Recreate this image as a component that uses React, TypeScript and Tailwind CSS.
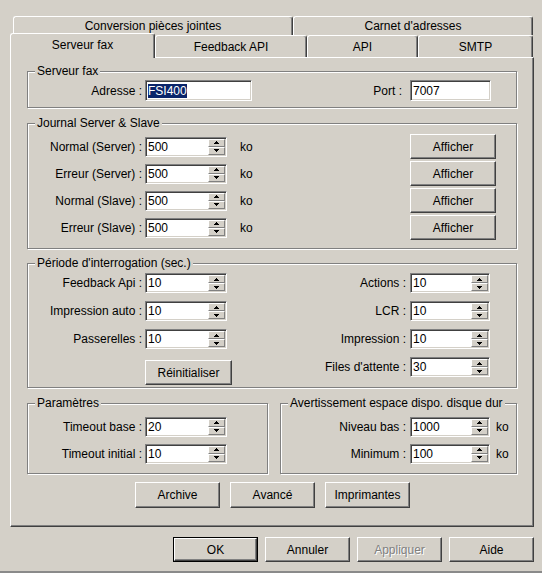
import React from "react";

const raised =
  "flex items-center justify-center bg-[#d4d0c8] border border-t-white border-l-white border-r-[#404040] border-b-[#404040] shadow-[inset_-1px_-1px_0_#808080]";

function Arrow({ up }: { up?: boolean }) {
  return (
    <svg width="5" height="3" viewBox="0 0 5 3" shapeRendering="crispEdges">
      {up ? (
        <>
          <rect x="2" y="0" width="1" height="1" fill="#000" />
          <rect x="1" y="1" width="3" height="1" fill="#000" />
          <rect x="0" y="2" width="5" height="1" fill="#000" />
        </>
      ) : (
        <>
          <rect x="0" y="0" width="5" height="1" fill="#000" />
          <rect x="1" y="1" width="3" height="1" fill="#000" />
          <rect x="2" y="2" width="1" height="1" fill="#000" />
        </>
      )}
    </svg>
  );
}

function Spin({ v, className }: { v: string; className: string }) {
  return (
    <div
      className={
        "flex h-[20px] bg-white p-[1px] border border-t-[#808080] border-l-[#808080] border-r-white border-b-white shadow-[inset_1px_1px_0_#404040,inset_-1px_-1px_0_#d4d0c8] " +
        className
      }
    >
      <span className="flex-1 pl-[1px] leading-[16px]">{v}</span>
      <div className="flex flex-col w-[17px]">
        <div className="h-[8px] flex items-center justify-center bg-[#d4d0c8] border border-t-white border-l-white border-r-[#808080] border-b-[#808080]">
          <Arrow up />
        </div>
        <div className="h-[8px] flex items-center justify-center bg-[#d4d0c8] border border-t-white border-l-white border-r-[#808080] border-b-[#808080]">
          <Arrow />
        </div>
      </div>
    </div>
  );
}

function Edit({ children, className }: { children: React.ReactNode; className: string }) {
  return (
    <div
      className={
        "flex items-center h-[21px] bg-white pl-[2px] border border-t-[#808080] border-l-[#808080] border-r-white border-b-white shadow-[inset_1px_1px_0_#404040,inset_-1px_-1px_0_#d4d0c8] " +
        className
      }
    >
      {children}
    </div>
  );
}

function Group({ title, className, children }: { title: string; className: string; children?: React.ReactNode }) {
  return (
    <div className={"relative border border-[#808080] shadow-[1px_1px_0_#fff,inset_1px_1px_0_#fff] " + className}>
      <span className="absolute -top-[8px] left-[7px] px-[2px] bg-[#d4d0c8] leading-[14px]">{title}</span>
      {children}
    </div>
  );
}

function Btn({ children, className, disabled }: { children: React.ReactNode; className: string; disabled?: boolean }) {
  return (
    <div className={raised + " " + className + (disabled ? " text-[#808080] [text-shadow:1px_1px_0_#fff]" : "")}>
      {children}
    </div>
  );
}

const tab =
  "flex items-center justify-center bg-[#d4d0c8] border-l border-t border-r border-l-white border-t-white border-r-[#404040] rounded-t-[3px] shadow-[inset_-1px_0_0_#808080]";

export default function App() {
  const journal = ["Normal (Server) :", "Erreur (Server) :", "Normal (Slave) :", "Erreur (Slave) :"];
  return (
    <div className="w-[542px] h-[573px] bg-[#d4d0c8] pt-[16px] text-[12px] leading-[14px] text-black font-['Liberation_Sans',Arial,sans-serif] border-b-2 border-[#8a8a8a] overflow-hidden">
      {/* tabs row 1 */}
      <div className="flex ml-[13px] h-[19px]">
        <div className={tab + " w-[280px]"}>Conversion pièces jointes</div>
        <div className={tab + " w-[240px]"}>Carnet d'adresses</div>
      </div>
      {/* tabs row 2 */}
      <div className="relative z-10 flex items-end ml-[10px] h-[22px]">
        <div className={tab + " w-[145px] h-[25px] -mb-[1px] pb-[3px]"}>Serveur fax</div>
        <div className={tab + " w-[152px] h-[22px]"}>Feedback API</div>
        <div className={tab + " w-[111px] h-[22px]"}>API</div>
        <div className={tab + " w-[115px] h-[22px]"}>SMTP</div>
      </div>

      {/* panel */}
      <div className="ml-[10px] w-[524px] h-[470px] border border-t-white border-l-white border-r-[#404040] border-b-[#404040] shadow-[inset_-1px_-1px_0_#808080]">
        <Group title="Serveur fax" className="mt-[13px] ml-[16px] w-[490px] h-[37px]">
          <div className="flex items-center pt-[8px]">
            <span className="w-[114px] text-right">Adresse :</span>
            <Edit className="ml-[3px] w-[107px]">
              <span className="bg-[#0a246a] text-white leading-[14px]">FSI400</span>
            </Edit>
            <span className="w-[150px] text-right">Port :</span>
            <Edit className="ml-[8px] w-[81px]">7007</Edit>
          </div>
        </Group>

        <Group title="Journal Server & Slave" className="mt-[15px] ml-[16px] w-[490px] h-[126px]">
          <div className="pt-[9px]">
            {journal.map((l) => (
              <div key={l} className="flex items-center h-[27px]">
                <span className="w-[114px] text-right">{l}</span>
                <Spin v="500" className="ml-[3px] w-[82px]" />
                <span className="ml-[13px]">ko</span>
                <Btn className="ml-auto mr-[20px] w-[86px] h-[25px]">Afficher</Btn>
              </div>
            ))}
          </div>
        </Group>

        <Group title="Période d'interrogation (sec.)" className="mt-[14px] ml-[16px] w-[490px] h-[125px]">
          <div className="flex pt-[5px]">
            <div className="flex flex-col w-[199px]">
              {[
                ["Feedback Api :", "10"],
                ["Impression auto :", "10"],
                ["Passerelles :", "10"],
              ].map(([l, v]) => (
                <div key={l} className="flex items-center h-[28px]">
                  <span className="w-[114px] text-right">{l}</span>
                  <Spin v={v} className="ml-[3px] w-[82px]" />
                </div>
              ))}
              <Btn className="mt-[7px] ml-[117px] w-[87px] h-[25px]">Réinitialiser</Btn>
            </div>
            <div className="flex flex-col">
              {[
                ["Actions :", "10"],
                ["LCR :", "10"],
                ["Impression :", "10"],
                ["Files d'attente :", "30"],
              ].map(([l, v]) => (
                <div key={l} className="flex items-center h-[28px]">
                  <span className="w-[179px] text-right">{l}</span>
                  <Spin v={v} className="ml-[4px] w-[80px]" />
                </div>
              ))}
            </div>
          </div>
        </Group>

        <div className="flex mt-[15px] ml-[16px]">
          <Group title="Paramètres" className="w-[241px] h-[71px]">
            <div className="pt-[9px]">
              {[
                ["Timeout base :", "20"],
                ["Timeout initial :", "10"],
              ].map(([l, v]) => (
                <div key={l} className="flex items-center h-[27px]">
                  <span className="w-[114px] text-right">{l}</span>
                  <Spin v={v} className="ml-[3px] w-[82px]" />
                </div>
              ))}
            </div>
          </Group>
          <Group title="Avertissement espace dispo. disque dur" className="ml-[12px] w-[237px] h-[71px]">
            <div className="pt-[9px]">
              {[
                ["Niveau bas :", "1000"],
                ["Minimum :", "100"],
              ].map(([l, v]) => (
                <div key={l} className="flex items-center h-[27px]">
                  <span className="w-[125px] text-right">{l}</span>
                  <Spin v={v} className="ml-[4px] w-[80px]" />
                  <span className="ml-[6px]">ko</span>
                </div>
              ))}
            </div>
          </Group>
        </div>

        <div className="flex gap-[10px] mt-[8px] ml-[124px]">
          <Btn className="w-[85px] h-[26px]">Archive</Btn>
          <Btn className="w-[85px] h-[26px]">Avancé</Btn>
          <Btn className="w-[85px] h-[26px]">Imprimantes</Btn>
        </div>
      </div>

      {/* dialog buttons */}
      <div className="flex justify-end gap-[7px] mt-[10px] pr-[8px]">
        <div className="flex w-[85px] h-[25px] border border-black">
          <Btn className="flex-1">OK</Btn>
        </div>
        <Btn className="w-[85px] h-[25px]">Annuler</Btn>
        <Btn className="w-[85px] h-[25px]" disabled>
          Appliquer
        </Btn>
        <Btn className="w-[85px] h-[25px]">Aide</Btn>
      </div>
    </div>
  );
}
